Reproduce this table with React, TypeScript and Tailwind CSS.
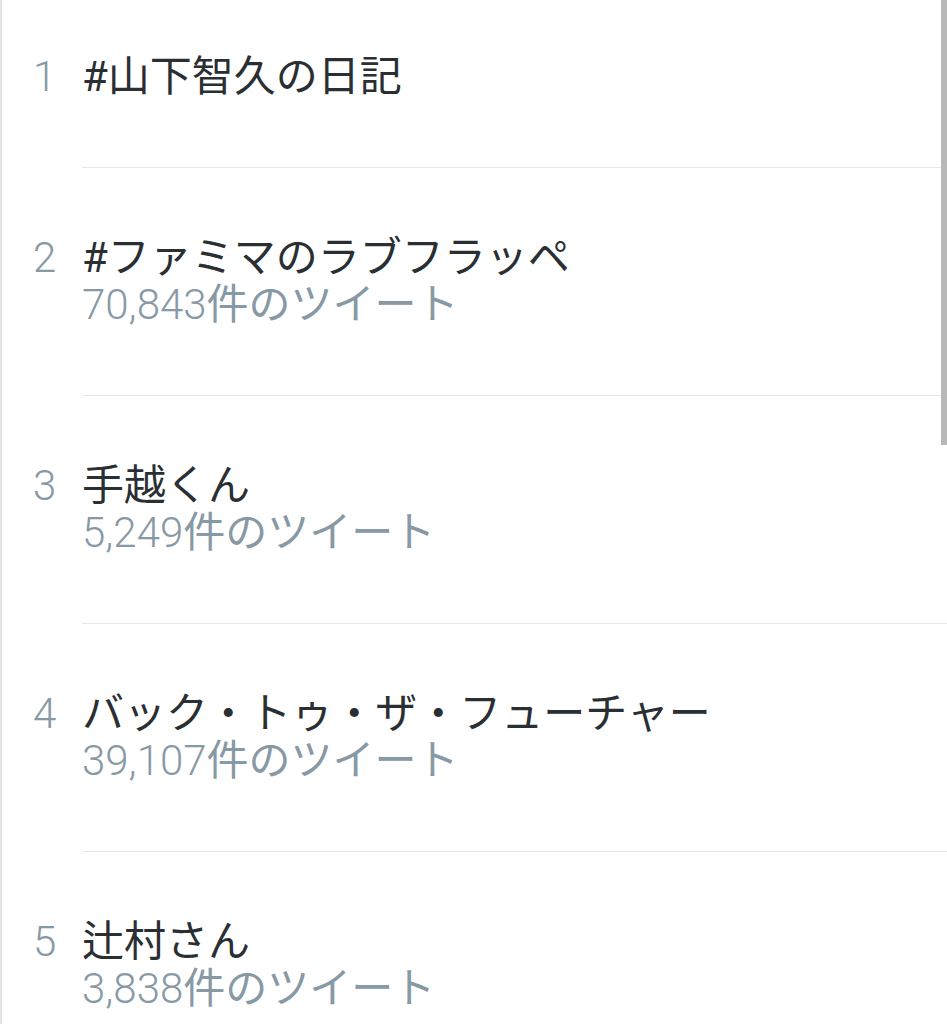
const trends = [
  { rank: 1, name: "#山下智久の日記", count: "" },
  { rank: 2, name: "#ファミマのラブフラッペ", count: "70,843" },
  { rank: 3, name: "手越くん", count: "5,249" },
  { rank: 4, name: "バック・トゥ・ザ・フューチャー", count: "39,107" },
  { rank: 5, name: "辻村さん", count: "3,838" },
];

export default function App() {
  return (
    <div
      className="relative h-[1024px] w-[947px] overflow-hidden border-l-2 border-[#e3e3e3] bg-white"
      style={{ fontFamily: 'Roboto, "Noto Sans CJK JP", sans-serif' }}
    >
      <div className="-mt-[13px] flex flex-col">
        {trends.map((t) => (
          <div key={t.rank} className="flex">
            <div className="w-[80px] shrink-0 pl-[31px] pt-[66px] text-[42px] font-light leading-[47px] text-[#8899a6]">
              {t.rank}
            </div>
            <div className="flex-1 border-b border-[#e1e8ed] pb-[67px] pt-[66px]">
              <div className="whitespace-nowrap text-[42px] leading-[47px] text-[#292f33]">{t.name}</div>
              {t.count && (
                <div className="whitespace-nowrap text-[42px] leading-[47px] text-[#8899a6]">
                  <span className="font-light">{t.count}</span>件のツイート
                </div>
              )}
            </div>
          </div>
        ))}
      </div>

      {/* scrollbar */}
      <div className="absolute right-0 top-0 h-[445px] w-[6px] bg-[#b8b8b8]" />
    </div>
  );
}
